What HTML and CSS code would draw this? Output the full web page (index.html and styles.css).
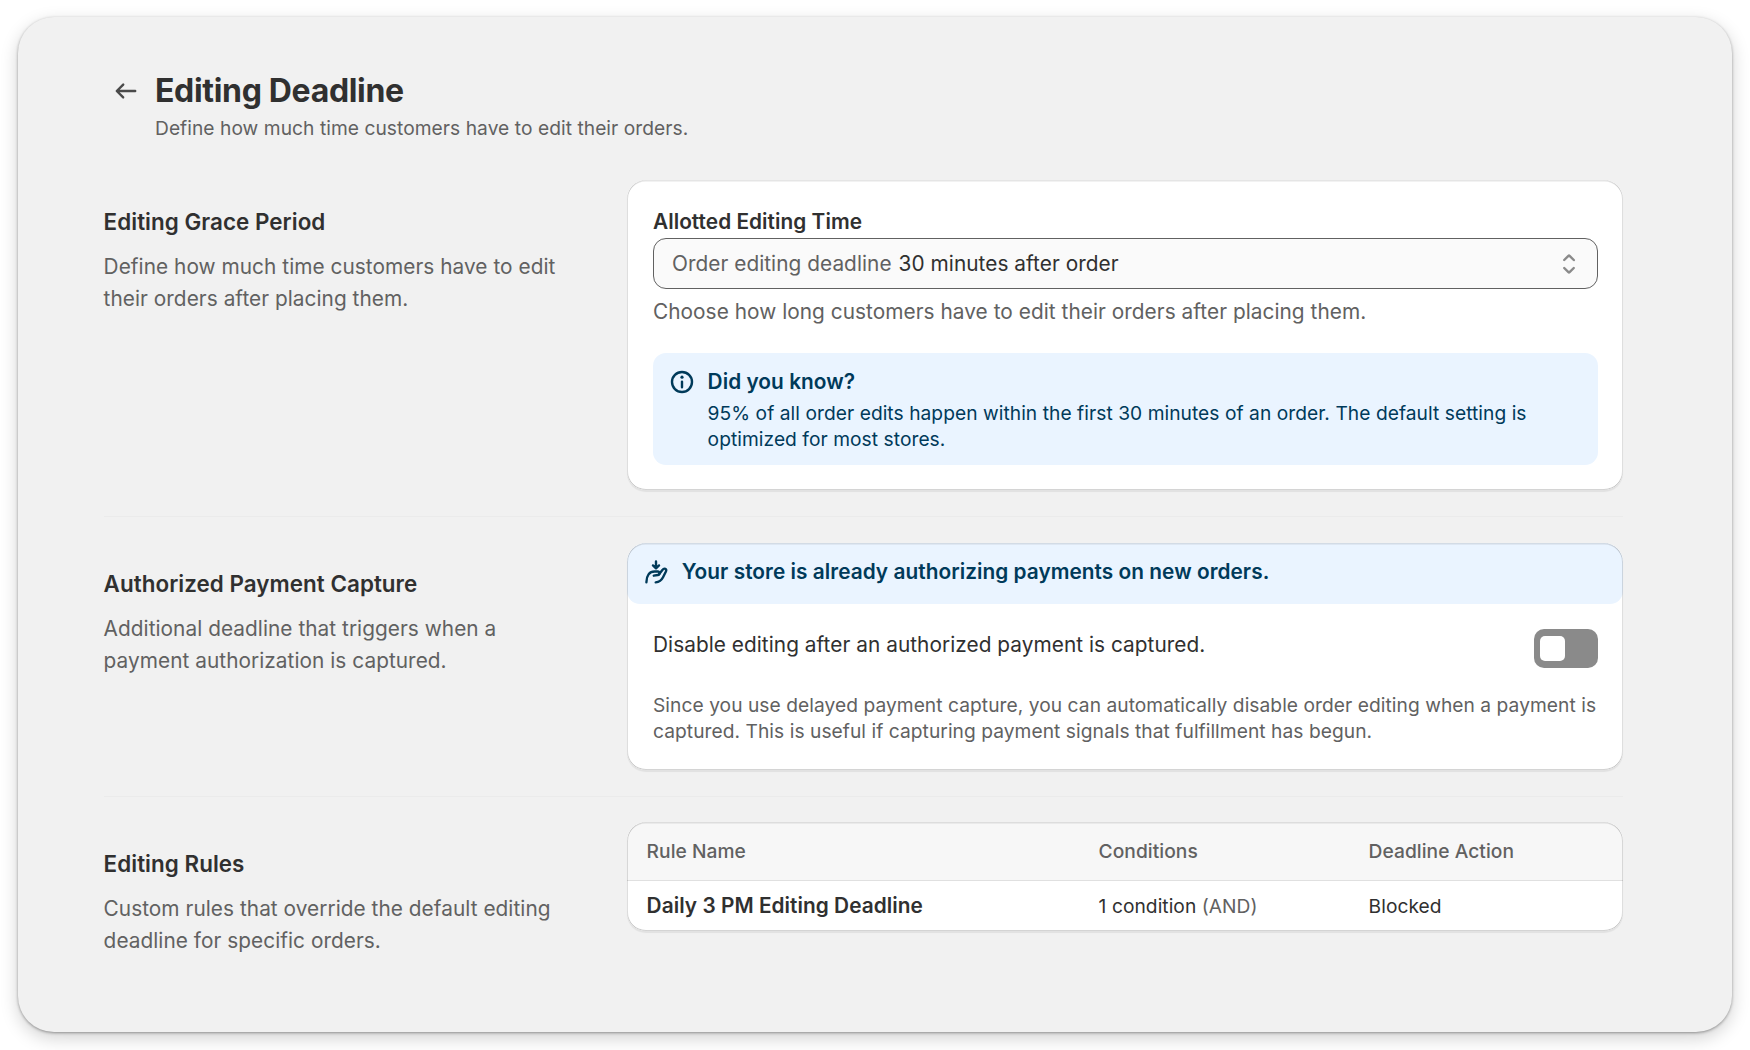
FILE: index.html
```html
<!DOCTYPE html>
<html lang="en">
    <head>
        <meta charset="UTF-8" />
        <meta name="viewport" content="width=device-width, initial-scale=1.0" />
        <title>Editing Deadline</title>
        <link rel="stylesheet" href="styles.css">
    </head>
    <body>
        <main class="page">
            <header class="page-header">
                <a class="back" href="#" aria-label="Back">
                    <svg class="icon" viewBox="0 0 20 20"><path fill-rule="evenodd" d="M16.5 10a.75.75 0 0 1-.75.75h-9.69l2.72 2.72a.75.75 0 0 1-1.06 1.06l-4-4a.75.75 0 0 1 0-1.06l4-4a.75.75 0 1 1 1.06 1.06l-2.72 2.72h9.69a.75.75 0 0 1 .75.75Z"/></svg>
                </a>
                <div>
                    <h1>Editing Deadline</h1>
                    <p class="subtitle">Define how much time customers have to edit their orders.</p>
                </div>
            </header>

            <section class="section">
                <div class="about">
                    <h2>Editing Grace Period</h2>
                    <p>Define how much time customers have to edit their orders after placing them.</p>
                </div>
                <div class="card">
                    <div class="card-body">
                        <h3>Allotted Editing Time</h3>
                        <div class="select">
                            <span class="select-label">Order editing deadline</span>
                            <span class="select-value">30 minutes after order</span>
                            <svg class="icon" viewBox="0 0 20 20"><path d="M10.884 4.323a1.25 1.25 0 0 0-1.768 0l-2.646 2.647a.75.75 0 0 0 1.06 1.06l2.47-2.47 2.47 2.47a.75.75 0 1 0 1.06-1.06l-2.646-2.647Z"/><path d="m13.53 13.03-2.646 2.647a1.25 1.25 0 0 1-1.768 0l-2.646-2.647a.75.75 0 0 1 1.06-1.06l2.47 2.47 2.47-2.47a.75.75 0 0 1 1.06 1.06Z"/></svg>
                        </div>
                        <p class="help">Choose how long customers have to edit their orders after placing them.</p>
                        <div class="banner">
                            <svg class="icon" viewBox="0 0 20 20"><path d="M10 14a.75.75 0 0 1-.75-.75v-3.5a.75.75 0 0 1 1.5 0v3.5a.75.75 0 0 1-.75.75Z"/><path d="M9 7a1 1 0 1 1 2 0 1 1 0 0 1-2 0Z"/><path fill-rule="evenodd" d="M17 10a7 7 0 1 1-14 0 7 7 0 0 1 14 0Zm-1.500 0a5.500 5.500 0 1 1-11 0 5.500 5.500 0 0 1 11 0Z"/></svg>
                            <div>
                                <h3>Did you know?</h3>
                                <p class="small">95% of all order edits happen within the first 30 minutes of an order. The default setting is optimized for most stores.</p>
                            </div>
                        </div>
                    </div>
                </div>
            </section>

            <hr>

            <section class="section">
                <div class="about">
                    <h2>Authorized Payment Capture</h2>
                    <p>Additional deadline that triggers when a payment authorization is captured.</p>
                </div>
                <div class="card">
                    <div class="banner banner-top">
                        <svg class="icon icon-line" viewBox="0 0 20 20">
                            <path d="M10 3.400v4M8.100 5.900 10 7.700l1.900-1.800"/>
                            <path d="M4 16.400c0-4.200 1.900-6.700 5.100-6.700h2c1.500 0 1.400 2 0 2.200l-2.500.4"/>
                            <path d="m12 11.300 2-2.600c1.200-1.500 2.900-.6 2.200 1l-1.800 3.600c-1 2-2.300 3-4.600 3.200"/>
                        </svg>
                        <h3>Your store is already authorizing payments on new orders.</h3>
                    </div>
                    <div class="card-body">
                        <div class="setting">
                            <span>Disable editing after an authorized payment is captured.</span>
                            <button class="toggle" role="switch" aria-checked="false" aria-label="Disable editing"><span class="knob"></span></button>
                        </div>
                        <p class="small muted">Since you use delayed payment capture, you can automatically disable order editing when a payment is captured. This is useful if capturing payment signals that fulfillment has begun.</p>
                    </div>
                </div>
            </section>

            <hr>

            <section class="section">
                <div class="about">
                    <h2>Editing Rules</h2>
                    <p>Custom rules that override the default editing deadline for specific orders.</p>
                </div>
                <div class="card">
                    <table class="rules">
                        <thead>
                            <tr>
                                <th class="col-name">Rule Name</th>
                                <th class="col-conditions">Conditions</th>
                                <th>Deadline Action</th>
                            </tr>
                        </thead>
                        <tbody>
                            <tr>
                                <td class="rule-name">Daily 3 PM Editing Deadline</td>
                                <td>1 condition <span class="muted">(AND)</span></td>
                                <td>Blocked</td>
                            </tr>
                        </tbody>
                    </table>
                </div>
            </section>
        </main>
    </body>
</html>
```
FILE: styles.css
```css
* {
    box-sizing: border-box;
}

body {
    margin: 0;
    padding: 17px 18px 18px;
    background: #fff;
    color: #303030;
    font-family: Inter, sans-serif;
    font-size: 20.8px;
    line-height: 32px;
    letter-spacing: 0.048px;
}

h1, h2, h3, p {
    margin: 0;
}

.page {
    height: 1015px;
    padding: 55px 109px 0 85.6px;
    background: #f1f1f1;
    border-radius: 36px;
    box-shadow: 0 1px 3px rgba(0, 0, 0, 0.36), 0 6px 18px rgba(0, 0, 0, 0.18);
}

.icon {
    display: block;
    flex: none;
    width: 32px;
    height: 32px;
    fill: currentColor;
}

.icon-line {
    fill: none;
    stroke: currentColor;
    stroke-width: 1.5;
    stroke-linecap: round;
    stroke-linejoin: round;
}

/* Header */
.page-header {
    display: flex;
    gap: 13.4px;
    height: 108.4px;
    padding-left: 6px;
}

.back {
    padding-top: 3px;
    color: #4a4a4a;
}

h1 {
    font-size: 32px;
    line-height: 38px;
    font-weight: 700;
    letter-spacing: -0.32px;
}

.subtitle {
    margin-top: 5px;
    color: #616161;
    font-size: 19.2px;
    line-height: 26px;
}

/* Sections */
.section {
    display: grid;
    grid-template-columns: 460px 996px;
    justify-content: space-between;
    align-items: start;
}

hr {
    height: 1px;
    margin: 25.8px 0 25.6px;
    border: 0;
    background: #ebebeb;
}

.about {
    padding-top: 25.6px;
}

.about h2 {
    margin-bottom: 12.8px;
    font-size: 22.4px;
    line-height: 32px;
    font-weight: 600;
}

.about p, .muted, .help {
    color: #616161;
}

h3 {
    font-size: 20.8px;
    font-weight: 600;
}

.small {
    font-size: 19.2px;
    line-height: 26px;
}

/* Cards */
.card {
    position: relative;
    overflow: hidden;
    background: #fff;
    border-radius: 19px;
    box-shadow: 0 2px 1px rgba(26, 26, 26, 0.07);
}

/* bevel drawn over the card content */
.card::after {
    content: "";
    position: absolute;
    inset: 0;
    border-radius: 19px;
    box-shadow: inset 1px 0 0 rgba(0, 0, 0, 0.13), inset -1px 0 0 rgba(0, 0, 0, 0.13), inset 0 -1px 0 rgba(0, 0, 0, 0.17), inset 0 1.6px 0 rgba(0, 0, 0, 0.1);
    pointer-events: none;
}

.card-body {
    padding: 25.6px 25.4px 25.4px 26px;
}

.select {
    display: flex;
    align-items: center;
    gap: 7px;
    height: 51px;
    padding: 1px 12px 0 18px;
    background: #fafafa;
    border: 1px solid #616161;
    border-radius: 13px;
}

.select-label {
    color: #616161;
}

.select .icon {
    margin-left: auto;
    color: #8a8a8a;
}

.help {
    margin: 7px 0 25px;
}

.banner {
    display: flex;
    gap: 9.6px;
    height: 112px;
    padding: 13px 13px 0;
    background: #eaf4ff;
    border-radius: 13px;
    color: #003a5a;
}

.banner .small {
    margin-top: 2px;
}

.banner-top {
    height: 60.8px;
    padding-left: 13.2px;
}

.setting {
    display: flex;
    justify-content: space-between;
    margin-bottom: 24.2px;
}

.toggle {
    width: 64px;
    height: 39px;
    padding: 7px 6px;
    background: #8a8a8a;
    border: 0;
    border-radius: 10px;
}

.knob {
    display: block;
    width: 25px;
    height: 25px;
    background: #fff;
    border-radius: 5px;
}

/* Rules table */
.rules {
    width: 100%;
    border-collapse: collapse;
    table-layout: fixed;
    font-size: 19.2px;
}

.rules th {
    height: 58px;
    padding: 0 0 0 19.6px;
    background: #f7f7f7;
    color: #616161;
    font-weight: 550;
    text-align: left;
}

.rules td {
    height: 51px;
    padding: 0 0 0 19.6px;
    border-top: 1px solid #e0e0e0;
}

.rules .rule-name {
    font-size: 20.8px;
    font-weight: 600;
}

.col-name {
    width: 452px;
}

.col-conditions {
    width: 270px;
}
```
